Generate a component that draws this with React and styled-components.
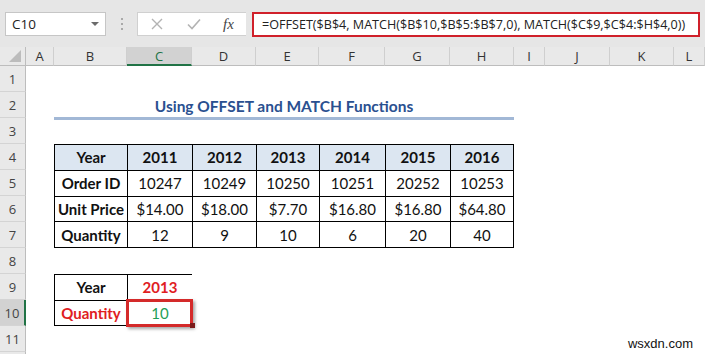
import React from "react";
import styled, { createGlobalStyle } from "styled-components";

const GlobalStyle = createGlobalStyle`
  html, body { margin: 0; padding: 0; background: #ffffff; overflow: hidden; }
  * { box-sizing: border-box; }
`;

const Root = styled.div`
  position: relative;
  width: 705px;
  height: 354px;
  overflow: hidden;
  background: #ffffff;
  font-family: "Open Sans", "Noto Sans", sans-serif;
`;

const TopBar = styled.div`
  height: 47px;
  background: #e6e6e6;
  display: flex;
  align-items: flex-start;
  padding: 12px 5px 0 5px;
`;

const NameBox = styled.div`
  flex: 0 0 101px;
  height: 24px;
  background: #ffffff;
  border: 1px solid #c6c6c6;
  display: flex;
  align-items: center;
  justify-content: space-between;
  padding: 0 6px 0 6px;
  font-size: 13.5px;
  color: #222;
`;

const DropArrow = styled.span`
  width: 0;
  height: 0;
  border-left: 4px solid transparent;
  border-right: 4px solid transparent;
  border-top: 4px solid #6b6b6b;
`;

const Grip = styled.div`
  flex: 0 0 31px;
  height: 24px;
  display: flex;
  flex-direction: column;
  align-items: center;
  justify-content: center;
  gap: 3px;
`;

const GripDot = styled.span`
  width: 2px;
  height: 2px;
  background: #a9a9a9;
`;

const FxBox = styled.div`
  flex: 0 0 109px;
  height: 24px;
  background: #ffffff;
  border: 1px solid #d0d0d0;
  border-right: none;
  display: flex;
  align-items: center;
  padding-left: 12px;
  gap: 22px;
`;

const FxLabel = styled.span`
  font-family: "Liberation Serif", "DejaVu Serif", serif;
  font-style: italic;
  font-size: 15px;
  color: #444;
  margin-left: -1px;
`;

const FormulaBox = styled.div`
  flex: 1 1 auto;
  min-width: 0;
  overflow: hidden;
  height: 25px;
  margin-left: 6px;
  background: #ffffff;
  border: 2px solid #d0202a;
  display: flex;
  align-items: center;
  padding-left: 8px;
  font-family: "Open Sans", sans-serif;
  font-size: 12.6px;
  color: #222;
  white-space: nowrap;
`;

const Sheet = styled.div`
  display: grid;
  grid-template-columns: 26px 28px 73px 65px 64px 63px 66px 65px 64px 31px 65px 64px 1fr;
  grid-template-rows: 19px repeat(12, 26px);
  background: #ffffff;
`;

const ColHead = styled.div`
  grid-row: 1;
  grid-column: ${(p) => p.$col};
  background: ${(p) => (p.$active ? "#d2d2d2" : "#e9e9e9")};
  border-right: 1px solid #cfcfcf;
  border-bottom: ${(p) => (p.$active ? "2px solid #217346" : "1px solid #bdbdbd")};
  display: flex;
  align-items: center;
  justify-content: center;
  font-size: 13px;
  color: ${(p) => (p.$active ? "#217346" : "#333")};
`;

const Corner = styled.div`
  grid-row: 1;
  grid-column: 1;
  background: #e9e9e9;
  border-right: 1px solid #bdbdbd;
  border-bottom: 1px solid #bdbdbd;
  position: relative;
`;

const CornerTri = styled.span`
  position: absolute;
  right: 4px;
  bottom: 3px;
  width: 0;
  height: 0;
  border-left: 12px solid transparent;
  border-bottom: 12px solid #bcbcbc;
`;

const RowHead = styled.div`
  grid-column: 1;
  grid-row: ${(p) => p.$row};
  background: ${(p) => (p.$active ? "#d2d2d2" : "#e9e9e9")};
  border-right: ${(p) => (p.$active ? "2px solid #217346" : "1px solid #bdbdbd")};
  border-bottom: 1px solid #d4d4d4;
  display: flex;
  align-items: center;
  justify-content: center;
  font-size: 13px;
  color: #444;
`;

const Title = styled.div`
  grid-column: 3 / 10;
  grid-row: 3;
  align-self: start;
  height: 28px;
  border-bottom: 3px solid #a2b8d6;
  display: flex;
  align-items: center;
  justify-content: center;
  padding-top: 2px;
  font-family: "Lato", sans-serif;
  font-weight: 700;
  font-size: 15.5px;
  color: #2a5090;
`;

const Table = styled.div`
  grid-column: ${(p) => p.$cols};
  grid-row: ${(p) => p.$rows};
  display: grid;
  grid-template-columns: ${(p) => p.$template};
  grid-auto-rows: 1fr;
  gap: 1px;
  padding: 1px;
  background: #000000;
`;

const Cell = styled.div`
  position: relative;
  background: ${(p) => (p.$head ? "#dce6f1" : "#ffffff")};
  display: flex;
  align-items: center;
  justify-content: center;
  font-family: "Lato", sans-serif;
  font-size: 15px;
  font-weight: ${(p) => (p.$bold ? 700 : 400)};
  color: ${(p) => p.$color || "#111"};
  white-space: nowrap;
`;

const Selection = styled.span`
  position: absolute;
  left: -2px;
  top: -2px;
  right: -1px;
  bottom: -2px;
  border: 3px solid #d42a2a;
  box-shadow: 2px 2px 3px rgba(0, 0, 0, 0.35);
`;

const FillHandle = styled.span`
  position: absolute;
  right: -3px;
  bottom: -3px;
  width: 5px;
  height: 5px;
  background: #7a1a1a;
`;

const Watermark = styled.div`
  position: absolute;
  right: 12px;
  bottom: 3px;
  font-family: "Liberation Sans", sans-serif;
  font-size: 13px;
  color: #111;
`;

const cols = ["A", "B", "C", "D", "E", "F", "G", "H", "I", "J", "K", "L"];
const years = ["2011", "2012", "2013", "2014", "2015", "2016"];
const orders = ["10247", "10249", "10250", "10251", "20252", "10253"];
const prices = ["$14.00", "$18.00", "$7.70", "$16.80", "$16.80", "$64.80"];
const qty = ["12", "9", "10", "6", "20", "40"];

export default function App() {
  return (
    <Root>
      <GlobalStyle />
      <TopBar>
        <NameBox>
          <span>C10</span>
          <DropArrow />
        </NameBox>
        <Grip>
          <GripDot />
          <GripDot />
          <GripDot />
        </Grip>
        <FxBox>
          <svg width="14" height="14" viewBox="0 0 14 14">
            <path d="M2 2 L12 12 M12 2 L2 12" stroke="#b3b3b3" strokeWidth="1.4" fill="none" />
          </svg>
          <svg width="16" height="14" viewBox="0 0 16 14">
            <path d="M2 7.5 L6 11.5 L14 2.5" stroke="#b3b3b3" strokeWidth="1.6" fill="none" />
          </svg>
          <FxLabel>fx</FxLabel>
        </FxBox>
        <FormulaBox>=OFFSET($B$4, MATCH($B$10,$B$5:$B$7,0), MATCH($C$9,$C$4:$H$4,0))</FormulaBox>
      </TopBar>
      <Sheet>
        <Corner>
          <CornerTri />
        </Corner>
        {cols.map((c, i) => (
          <ColHead key={c} $col={i + 2} $active={c === "C"}>
            {c}
          </ColHead>
        ))}
        {Array.from({ length: 12 }, (_, i) => (
          <RowHead key={i} $row={i + 2} $active={i + 1 === 10}>
            {i < 11 ? i + 1 : ""}
          </RowHead>
        ))}
        <Title>Using OFFSET and MATCH Functions</Title>
        <Table $cols="3 / 10" $rows="5 / 9" $template="72px 64px 63px 62px 65px 64px 62px">
          <Cell $head $bold>Year</Cell>
          {years.map((y) => (
            <Cell key={y} $head $bold>{y}</Cell>
          ))}
          <Cell $bold>Order ID</Cell>
          {orders.map((v, i) => (
            <Cell key={i}>{v}</Cell>
          ))}
          <Cell $bold>Unit Price</Cell>
          {prices.map((v, i) => (
            <Cell key={i}>{v}</Cell>
          ))}
          <Cell $bold>Quantity</Cell>
          {qty.map((v, i) => (
            <Cell key={i}>{v}</Cell>
          ))}
        </Table>
        <Table $cols="3 / 5" $rows="10 / 12" $template="72px 64px">
          <Cell $bold>Year</Cell>
          <Cell $bold $color="#e0201f">2013</Cell>
          <Cell $bold $color="#e0201f">Quantity</Cell>
          <Cell $color="#1e9e55">
            10
            <Selection />
            <FillHandle />
          </Cell>
        </Table>
      </Sheet>
      <Watermark>wsxdn.com</Watermark>
    </Root>
  );
}
